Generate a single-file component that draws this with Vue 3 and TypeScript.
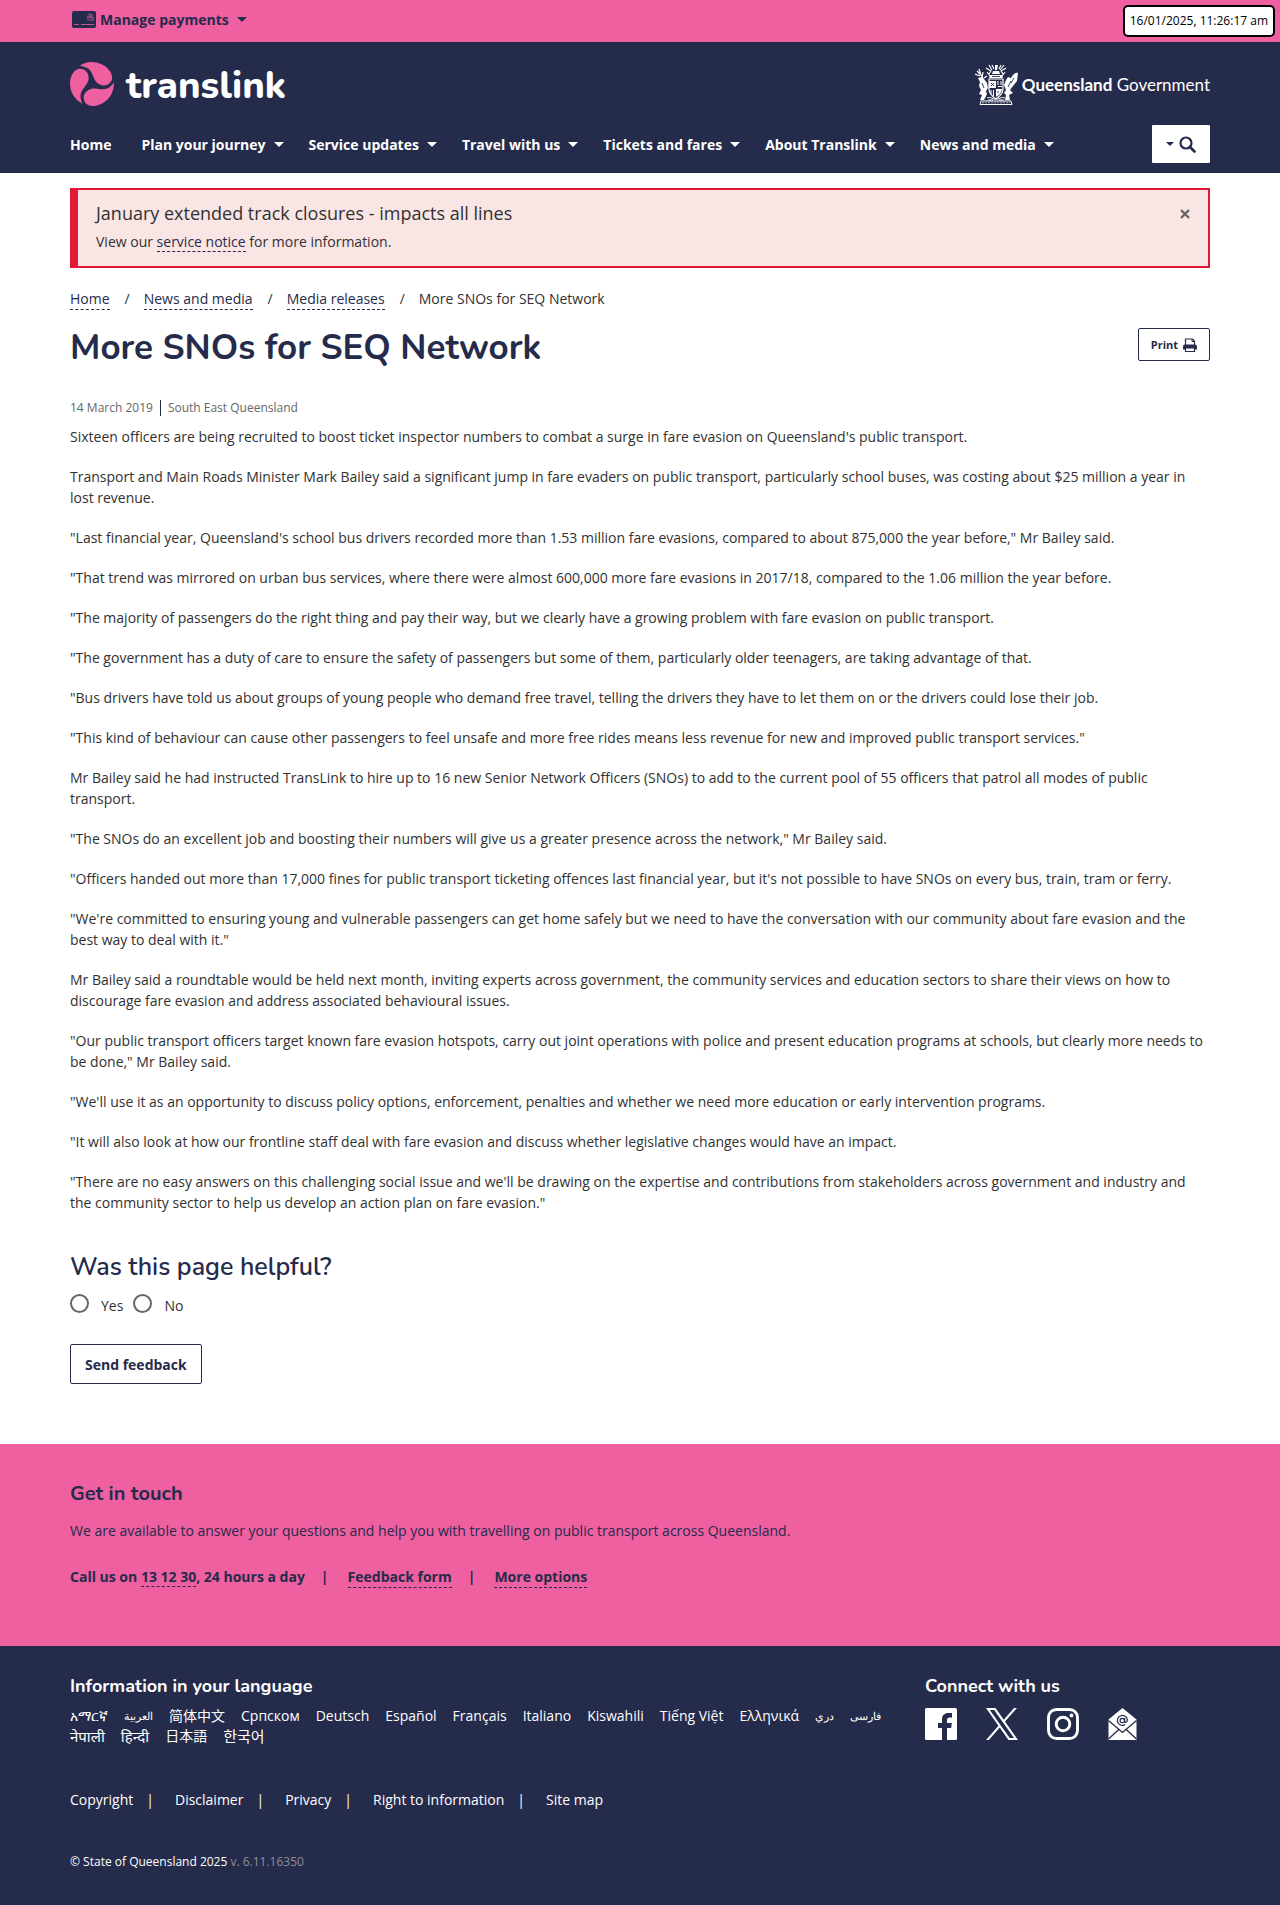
<script setup lang="ts">
import { ref } from 'vue'

interface NavItem {
  label: string
  menu: boolean
}

const nav: NavItem[] = [
  { label: 'Home', menu: false },
  { label: 'Plan your journey', menu: true },
  { label: 'Service updates', menu: true },
  { label: 'Travel with us', menu: true },
  { label: 'Tickets and fares', menu: true },
  { label: 'About Translink', menu: true },
  { label: 'News and media', menu: true },
]

const crumbs: string[] = ['Home', 'News and media', 'Media releases']

const paragraphs: string[] = [
  "Sixteen officers are being recruited to boost ticket inspector numbers to combat a surge in fare evasion on Queensland's public transport.",
  'Transport and Main Roads Minister Mark Bailey said a significant jump in fare evaders on public transport, particularly school buses, was costing about $25 million a year in lost revenue.',
  '"Last financial year, Queensland\'s school bus drivers recorded more than 1.53 million fare evasions, compared to about 875,000 the year before," Mr Bailey said.',
  '"That trend was mirrored on urban bus services, where there were almost 600,000 more fare evasions in 2017/18, compared to the 1.06 million the year before.',
  '"The majority of passengers do the right thing and pay their way, but we clearly have a growing problem with fare evasion on public transport.',
  '"The government has a duty of care to ensure the safety of passengers but some of them, particularly older teenagers, are taking advantage of that.',
  '"Bus drivers have told us about groups of young people who demand free travel, telling the drivers they have to let them on or the drivers could lose their job.',
  '"This kind of behaviour can cause other passengers to feel unsafe and more free rides means less revenue for new and improved public transport services."',
  'Mr Bailey said he had instructed TransLink to hire up to 16 new Senior Network Officers (SNOs) to add to the current pool of 55 officers that patrol all modes of public transport.',
  '"The SNOs do an excellent job and boosting their numbers will give us a greater presence across the network," Mr Bailey said.',
  '"Officers handed out more than 17,000 fines for public transport ticketing offences last financial year, but it\'s not possible to have SNOs on every bus, train, tram or ferry.',
  '"We\'re committed to ensuring young and vulnerable passengers can get home safely but we need to have the conversation with our community about fare evasion and the best way to deal with it."',
  'Mr Bailey said a roundtable would be held next month, inviting experts across government, the community services and education sectors to share their views on how to discourage fare evasion and address associated behavioural issues.',
  '"Our public transport officers target known fare evasion hotspots, carry out joint operations with police and present education programs at schools, but clearly more needs to be done," Mr Bailey said.',
  '"We\'ll use it as an opportunity to discuss policy options, enforcement, penalties and whether we need more education or early intervention programs.',
  '"It will also look at how our frontline staff deal with fare evasion and discuss whether legislative changes would have an impact.',
  '"There are no easy answers on this challenging social issue and we\'ll be drawing on the expertise and contributions from stakeholders across government and industry and the community sector to help us develop an action plan on fare evasion."',
]

interface Language {
  label: string
  lang: string
  script?: 'arabic' | 'large'
}

const languages: Language[] = [
  { label: 'አማርኛ', lang: 'am' },
  { label: 'العربية', lang: 'ar', script: 'arabic' },
  { label: '简体中文', lang: 'zh' },
  { label: 'Српском', lang: 'sr' },
  { label: 'Deutsch', lang: 'de' },
  { label: 'Español', lang: 'es' },
  { label: 'Français', lang: 'fr' },
  { label: 'Italiano', lang: 'it' },
  { label: 'Kiswahili', lang: 'sw' },
  { label: 'Tiếng Việt', lang: 'vi' },
  { label: 'Ελληνικά', lang: 'el' },
  { label: 'دري', lang: 'prs', script: 'arabic' },
  { label: 'فارسی', lang: 'fa', script: 'arabic' },
  { label: 'नेपाली', lang: 'ne', script: 'large' },
  { label: 'हिन्दी', lang: 'hi', script: 'large' },
  { label: '日本語', lang: 'ja' },
  { label: '한국어', lang: 'ko', script: 'large' },
]

const legal: string[] = ['Copyright', 'Disclaimer', 'Privacy', 'Right to information', 'Site map']

const bladeAngles: number[] = [0, 120, 240]

const alertOpen = ref(true)
const helpful = ref('')
</script>

<template>
  <div class="page">
    <div class="topbar">
      <div class="container">
        <button class="payments" type="button">
          <svg class="card" viewBox="0 0 24 17" aria-hidden="true">
            <rect width="24" height="17" rx="2" fill="#252b4b" />
            <path d="M2 13.5H7M9 13.5H22" stroke="#ef60a1" stroke-width="0.8" />
            <g fill="none" stroke="#ef60a1" stroke-width="0.8" stroke-linecap="round">
              <path d="M15 7A4 4 0 0 1 21.500 9.500" />
              <path d="M15.500 5A5.500 5.500 0 0 1 21.800 7" />
              <path d="M17 3A5 5 0 0 1 21 4.500" />
              <path d="M15.500 9A2.500 2.500 0 0 1 19.500 9.800" />
            </g>
          </svg>
          <span>Manage payments</span>
          <i class="caret"></i>
        </button>
      </div>
      <time class="stamp">16/01/2025, 11:26:17 am</time>
    </div>

    <header class="header">
      <div class="container">
        <div class="brands">
          <a class="translink" href="#" aria-label="Translink home">
            <svg class="mark" viewBox="212 187 130 130" aria-hidden="true">
              <path
                v-for="angle in bladeAngles"
                :key="angle"
                :transform="`rotate(${angle} 277 252)`"
                fill="#ef60a1"
                d="M248 310A65 65 0 0 1 212 252C212 226 226 207 241 207C258 207 268 220 267 236C266 256 244 266 243 286C243 294 245 302 248 310Z"
              />
            </svg>
            <span class="wordmark">translink</span>
          </a>
          <a class="qld" href="#" aria-label="Queensland Government">
            <svg class="crest" viewBox="0 0 44 42" aria-hidden="true">
              <g fill="#fff">
                <path d="M6 38H36L37 41.500H5Z" fill="none" stroke="#fff" stroke-width="1" />
                <path d="M7 39.800H35" stroke="#fff" stroke-width="0.600" stroke-dasharray="2 1" />
                <path d="M3 15L7 14L9 16L12 20L13 25L11 28L12 31L9 37H5L7 32L4 31L6 27L4 23L5 19Z" />
                <path d="M43 10C41 9 38 11 36 15L33 14L31 17L29 22L31 27L29 30L31 32L30 37H35L34 32L38 30L35 27L38 23L42 18Z" />
                <path d="M2 8L6 12L8 15M0 11L5 13M4 6L6 12M8 9L7 15M12 13L9 15" fill="none" stroke="#fff" stroke-width="1.200" />
                <path d="M14 16H28V26C28 31 24 34 21 36C18 34 14 31 14 26Z" fill="none" stroke="#fff" stroke-width="1.200" />
                <path d="M14 18H21V25H14ZM21 26H27C26 31 23 33 21 34Z" />
                <path d="M23 18V22M26 18V22M23 23.500H27M16 27V31M18.500 27V33" stroke="#fff" stroke-width="1" />
                <path d="M15 12H27L28 15H14ZM18 8H24L25 11H17ZM20 2H23L22 7H20Z" />
                <path d="M11 5L16 8L14 11M12 9L15 13M14 2L17 7M31 5L26 8L28 11M30 9L27 13M29 2L25 7M17 2L19 6M26 2L24 6" fill="none" stroke="#fff" stroke-width="1.100" />
                <path d="M12 35C16 33 18 37 21 36C24 37 26 33 30 35M13 37L18 37M24 37H29" fill="none" stroke="#fff" stroke-width="1" />
              </g>
              <path d="M16 20L19 23M19 20L16 23M22 29H24M7 20L9 25M36 18L33 24M39 15L36 20M17 13.500H25" stroke="#252b4b" stroke-width="0.900" />
            </svg>
            <span class="qldname"><b>Queensland</b> Government</span>
          </a>
        </div>
        <div class="navrow">
          <nav class="nav" aria-label="Main">
            <a v-for="item in nav" :key="item.label" href="#" :class="{ plain: !item.menu }">
              {{ item.label }}<i v-if="item.menu" class="caret"></i>
            </a>
          </nav>
          <button class="search" type="button" aria-label="Search">
            <i class="caret small"></i>
            <svg viewBox="0 0 17 17" width="17" height="17" aria-hidden="true">
              <circle cx="7" cy="7" r="5.500" fill="none" stroke="#252b4b" stroke-width="2.200" />
              <path d="M11 11L15.500 15.500" stroke="#252b4b" stroke-width="2.600" stroke-linecap="round" />
            </svg>
          </button>
        </div>
      </div>
    </header>

    <main class="container">
      <section v-if="alertOpen" class="alert">
        <div>
          <h2>January extended track closures - impacts all lines</h2>
          <p>View our <a class="dashed" href="#">service notice</a> for more information.</p>
        </div>
        <button type="button" aria-label="Close" @click="alertOpen = false">
          <svg viewBox="0 0 10 10" width="10" height="10" aria-hidden="true">
            <path d="M1 1L9 9M9 1L1 9" stroke="#666" stroke-width="2.400" />
          </svg>
        </button>
      </section>

      <nav class="crumbs" aria-label="Breadcrumb">
        <template v-for="c in crumbs" :key="c">
          <a class="dashed" href="#">{{ c }}</a><span class="sep">/</span>
        </template>
        <span>More SNOs for SEQ Network</span>
      </nav>

      <div class="titlerow">
        <h1>More SNOs for SEQ Network</h1>
        <button class="print" type="button">
          Print
          <svg viewBox="0 0 16 16" width="16" height="16" aria-hidden="true">
            <path d="M3.500 8V2H10.500L12.500 4V8" fill="#fff" stroke="#252b4b" stroke-width="1.200" />
            <path d="M10 2V4.500H12.500" fill="none" stroke="#252b4b" stroke-width="1" />
            <path d="M1 9.500Q1 7.500 3 7.500H13Q15 7.500 15 9.500V12.500H1Z" fill="#252b4b" />
            <path d="M3.500 11H12.500V14.500H3.500Z" fill="#fff" stroke="#252b4b" stroke-width="1.200" />
          </svg>
        </button>
      </div>

      <div class="meta"><span>14 March 2019</span><span class="region">South East Queensland</span></div>

      <article class="article">
        <p v-for="(text, i) in paragraphs" :key="i">{{ text }}</p>
      </article>

      <form class="feedback" @submit.prevent>
        <h2>Was this page helpful?</h2>
        <div class="choices">
          <label><input v-model="helpful" type="radio" name="helpful" value="yes" /><span>Yes</span></label>
          <label><input v-model="helpful" type="radio" name="helpful" value="no" /><span>No</span></label>
        </div>
        <button class="send" type="submit">Send feedback</button>
      </form>
    </main>

    <section class="touch">
      <div class="container">
        <h2>Get in touch</h2>
        <p>We are available to answer your questions and help you with travelling on public transport across Queensland.</p>
        <div class="contact">
          <span>Call us on <a class="dashed" href="#">13 12 30</a>, 24 hours a day</span>
          <span class="divider">|</span>
          <a class="dashed" href="#">Feedback form</a>
          <span class="divider">|</span>
          <a class="dashed" href="#">More options</a>
        </div>
      </div>
    </section>

    <footer class="footer">
      <div class="container">
        <div class="columns">
          <section class="info">
            <h2>Information in your language</h2>
            <div class="langs">
              <a v-for="l in languages" :key="l.lang" href="#" :lang="l.lang" :class="l.script">{{ l.label }}</a>
            </div>
          </section>
          <section class="connect">
            <h2>Connect with us</h2>
            <div class="social">
              <a href="#" aria-label="Facebook">
                <svg viewBox="0 0 32 32" width="32" height="32">
                  <rect width="32" height="32" rx="1.500" fill="#fff" />
                  <path d="M17 32V20H13V15H17V11.500C17 7.300 19.500 5 23.500 5H27V9.500H24.800C22.800 9.500 22 10.400 22 12V15H26.800L26.200 20H22V32Z" fill="#252b4b" />
                </svg>
              </a>
              <a href="#" aria-label="X">
                <svg viewBox="0 0 24 24" width="32" height="32">
                  <path fill="#fff" d="M14.258 10.152L23.176 0h-2.113l-7.747 8.813L7.133 0H0l9.352 13.328L0 23.973h2.113l8.176-9.309 6.531 9.309h7.133zm-2.895 3.293l-.949-1.328L2.875 1.560h3.246l6.086 8.523.945 1.328 7.910 11.078h-3.246zm0 0" />
                </svg>
              </a>
              <a href="#" aria-label="Instagram">
                <svg viewBox="0 0 32 32" width="32" height="32" fill="none" stroke="#fff" stroke-width="2.900">
                  <rect x="1.500" y="1.500" width="29" height="29" rx="8" />
                  <circle cx="16" cy="16" r="6.800" />
                  <circle cx="24.500" cy="7.500" r="1.900" fill="#fff" stroke="none" />
                </svg>
              </a>
              <a href="#" aria-label="Email newsletter">
                <svg viewBox="0 0 29 32" width="29" height="32">
                  <path d="M14.500 0L28.500 11.500V32H0.500V11.500Z" fill="#fff" />
                  <path d="M0.500 12.500L14.500 24.500L28.500 12.500M0.500 31L10.800 21.500M28.500 31L18.200 21.500" fill="none" stroke="#252b4b" stroke-width="1.300" />
                  <g fill="none" stroke="#252b4b" stroke-width="1.200">
                    <circle cx="14.300" cy="12.500" r="2.200" />
                    <path d="M16.700 10V13.500Q17 14.800 18.300 14.300Q19.700 13.300 19.300 11.300A5 5 0 1 0 17.200 16.600" />
                  </g>
                </svg>
              </a>
            </div>
          </section>
        </div>
        <nav class="legal" aria-label="Legal">
          <template v-for="(item, i) in legal" :key="item">
            <span v-if="i > 0" class="bar">|</span>
            <a href="#">{{ item }}</a>
          </template>
        </nav>
        <p class="copy"><a href="#">© State of Queensland 2025</a> <span>v. 6.11.16350</span></p>
      </div>
    </footer>
  </div>
</template>

<style>
body {
  margin: 0;
}
</style>

<style scoped>
.page {
  font: 14px/21px 'Open Sans', 'Noto Sans', 'Noto Sans CJK SC', sans-serif;
  color: #313131;
  background: #fff;
}
.container {
  max-width: 1140px;
  margin: 0 auto;
}
h1,
h2,
p {
  margin: 0;
}
h1,
h2 {
  font-family: Nunito, Lato, 'Open Sans', sans-serif;
  font-weight: 700;
  color: #252b4b;
}
a {
  color: inherit;
  text-decoration: none;
}
button {
  font: inherit;
  cursor: pointer;
}
.dashed {
  color: #252b4b;
  border-bottom: 1px dashed #252b4b;
}
.caret {
  display: inline-block;
  border: 5px solid transparent;
  border-top-color: currentColor;
  border-bottom: 0;
}
.topbar {
  position: relative;
  background: #ef60a1;
  height: 42px;
}
.payments {
  display: flex;
  align-items: center;
  height: 39px;
  padding: 0 0 0 2px;
  border: 0;
  background: none;
  color: #252b4b;
  font-weight: 700;
}
.card {
  width: 24px;
  height: 17px;
  margin-right: 4px;
}
.payments .caret {
  margin-left: 8px;
}
.stamp {
  position: absolute;
  top: 5px;
  right: 5px;
  padding: 5px;
  border: 2px solid #000;
  border-radius: 5px;
  background: #fff;
  color: #000;
  font-size: 12px;
  line-height: 18px;
}
.header {
  background: #252b4b;
  color: #fff;
  padding: 20px 0 10px;
}
.brands,
.navrow,
.titlerow {
  display: flex;
  justify-content: space-between;
}
.brands {
  height: 44px;
  margin-bottom: 19px;
}
.translink,
.qld {
  display: flex;
  align-items: center;
}
.mark {
  width: 44px;
  height: 44px;
}
.wordmark {
  margin-left: 12px;
  padding-top: 4px;
  font: 800 38px/44px Nunito, Lato, sans-serif;
}
.crest {
  width: 44px;
  height: 42px;
}
.qldname {
  margin-left: 3px;
  padding-top: 2px;
  font: 17px/24px Lato, sans-serif;
}
.navrow {
  align-items: center;
}
.nav {
  display: flex;
  gap: 25px;
  font-weight: 700;
}
.nav a {
  display: flex;
  align-items: center;
}
.nav .plain {
  padding-right: 5px;
}
.nav .caret {
  margin-left: 8px;
}
.search {
  display: flex;
  align-items: center;
  justify-content: center;
  gap: 5px;
  width: 58px;
  height: 38px;
  padding: 0;
  border: 0;
  border-radius: 1px;
  background: #fff;
  color: #252b4b;
}
.small {
  border-width: 4px;
  border-bottom: 0;
}
.alert {
  display: flex;
  justify-content: space-between;
  align-items: flex-start;
  margin-top: 15px;
  padding: 10px 18px 14px;
  border: 2px solid #e31837;
  border-left-width: 8px;
  background: #f9e5e4;
}
.alert h2 {
  margin-bottom: 4px;
  font: 400 18px/27px 'Open Sans', sans-serif;
  color: #313131;
}
.alert button {
  display: flex;
  padding: 9px 0;
  border: 0;
  background: none;
}
.crumbs {
  display: flex;
  margin-top: 21px;
  line-height: 20px;
}
.sep {
  margin: 0 14px 0 15px;
}
.titlerow {
  align-items: flex-start;
  margin-top: 16px;
}
h1 {
  font-size: 35px;
  line-height: 44px;
}
.print {
  display: flex;
  align-items: center;
  gap: 4px;
  height: 33px;
  margin-top: 2px;
  padding: 0 11px 0 12px;
  border: 1px solid #252b4b;
  border-radius: 2px;
  background: #fff;
  color: #252b4b;
  font-size: 11px;
  font-weight: 700;
}
.meta {
  display: flex;
  align-items: center;
  margin: 30px 0 10px;
  font-size: 12px;
  line-height: 16px;
  color: #666;
}
.region {
  margin-left: 7px;
  padding-left: 7px;
  border-left: 1px solid #252b4b;
}
.article p + p {
  margin-top: 19px;
}
.feedback {
  padding: 38px 0 60px;
}
.feedback h2 {
  font-size: 25px;
  font-weight: 600;
  line-height: 32px;
}
.choices {
  display: flex;
  gap: 10px;
  margin: 11px 0 28px;
}
.choices label {
  display: flex;
  align-items: flex-start;
  gap: 12px;
}
.choices input {
  appearance: none;
  width: 19px;
  height: 19px;
  margin: 0;
  border: 2px solid #666;
  border-radius: 50%;
}
.choices input:checked {
  background: radial-gradient(#252b4b 45%, #fff 50%);
}
.choices span {
  padding-top: 1px;
}
.send {
  height: 40px;
  padding: 0 14px;
  border: 1px solid #252b4b;
  border-radius: 2px;
  background: #fff;
  color: #252b4b;
  font-weight: 700;
}
.touch {
  background: #ef60a1;
  color: #252b4b;
  padding: 36px 0 58px;
}
.touch h2 {
  font-size: 20px;
  line-height: 28px;
}
.touch p {
  margin: 12px 0 25px;
}
.contact {
  display: flex;
  font-weight: 700;
}
.divider {
  margin: 0 19px 0 16px;
}
.footer {
  background: #252b4b;
  color: #fff;
  padding: 28px 0 33px;
}
.footer h2 {
  color: #fff;
  font-size: 18px;
  line-height: 24px;
}
.columns {
  display: flex;
}
.info {
  width: 75%;
}
.langs {
  display: flex;
  flex-wrap: wrap;
  column-gap: 16px;
  max-width: 840px;
  margin-top: 8px;
  line-height: 20px;
}
.arabic {
  font-size: 11px;
}
.large {
  font-size: 15px;
}
.social {
  display: flex;
  gap: 29px;
  margin-top: 10px;
}
.social a,
.social svg {
  display: block;
}
.legal {
  display: flex;
  margin-top: 43px;
}
.bar {
  margin: 0 21px 0 13px;
}
.copy {
  margin-top: 42px;
  font-size: 12px;
  line-height: 20px;
}
.copy span {
  color: #8d8f98;
}
</style>
